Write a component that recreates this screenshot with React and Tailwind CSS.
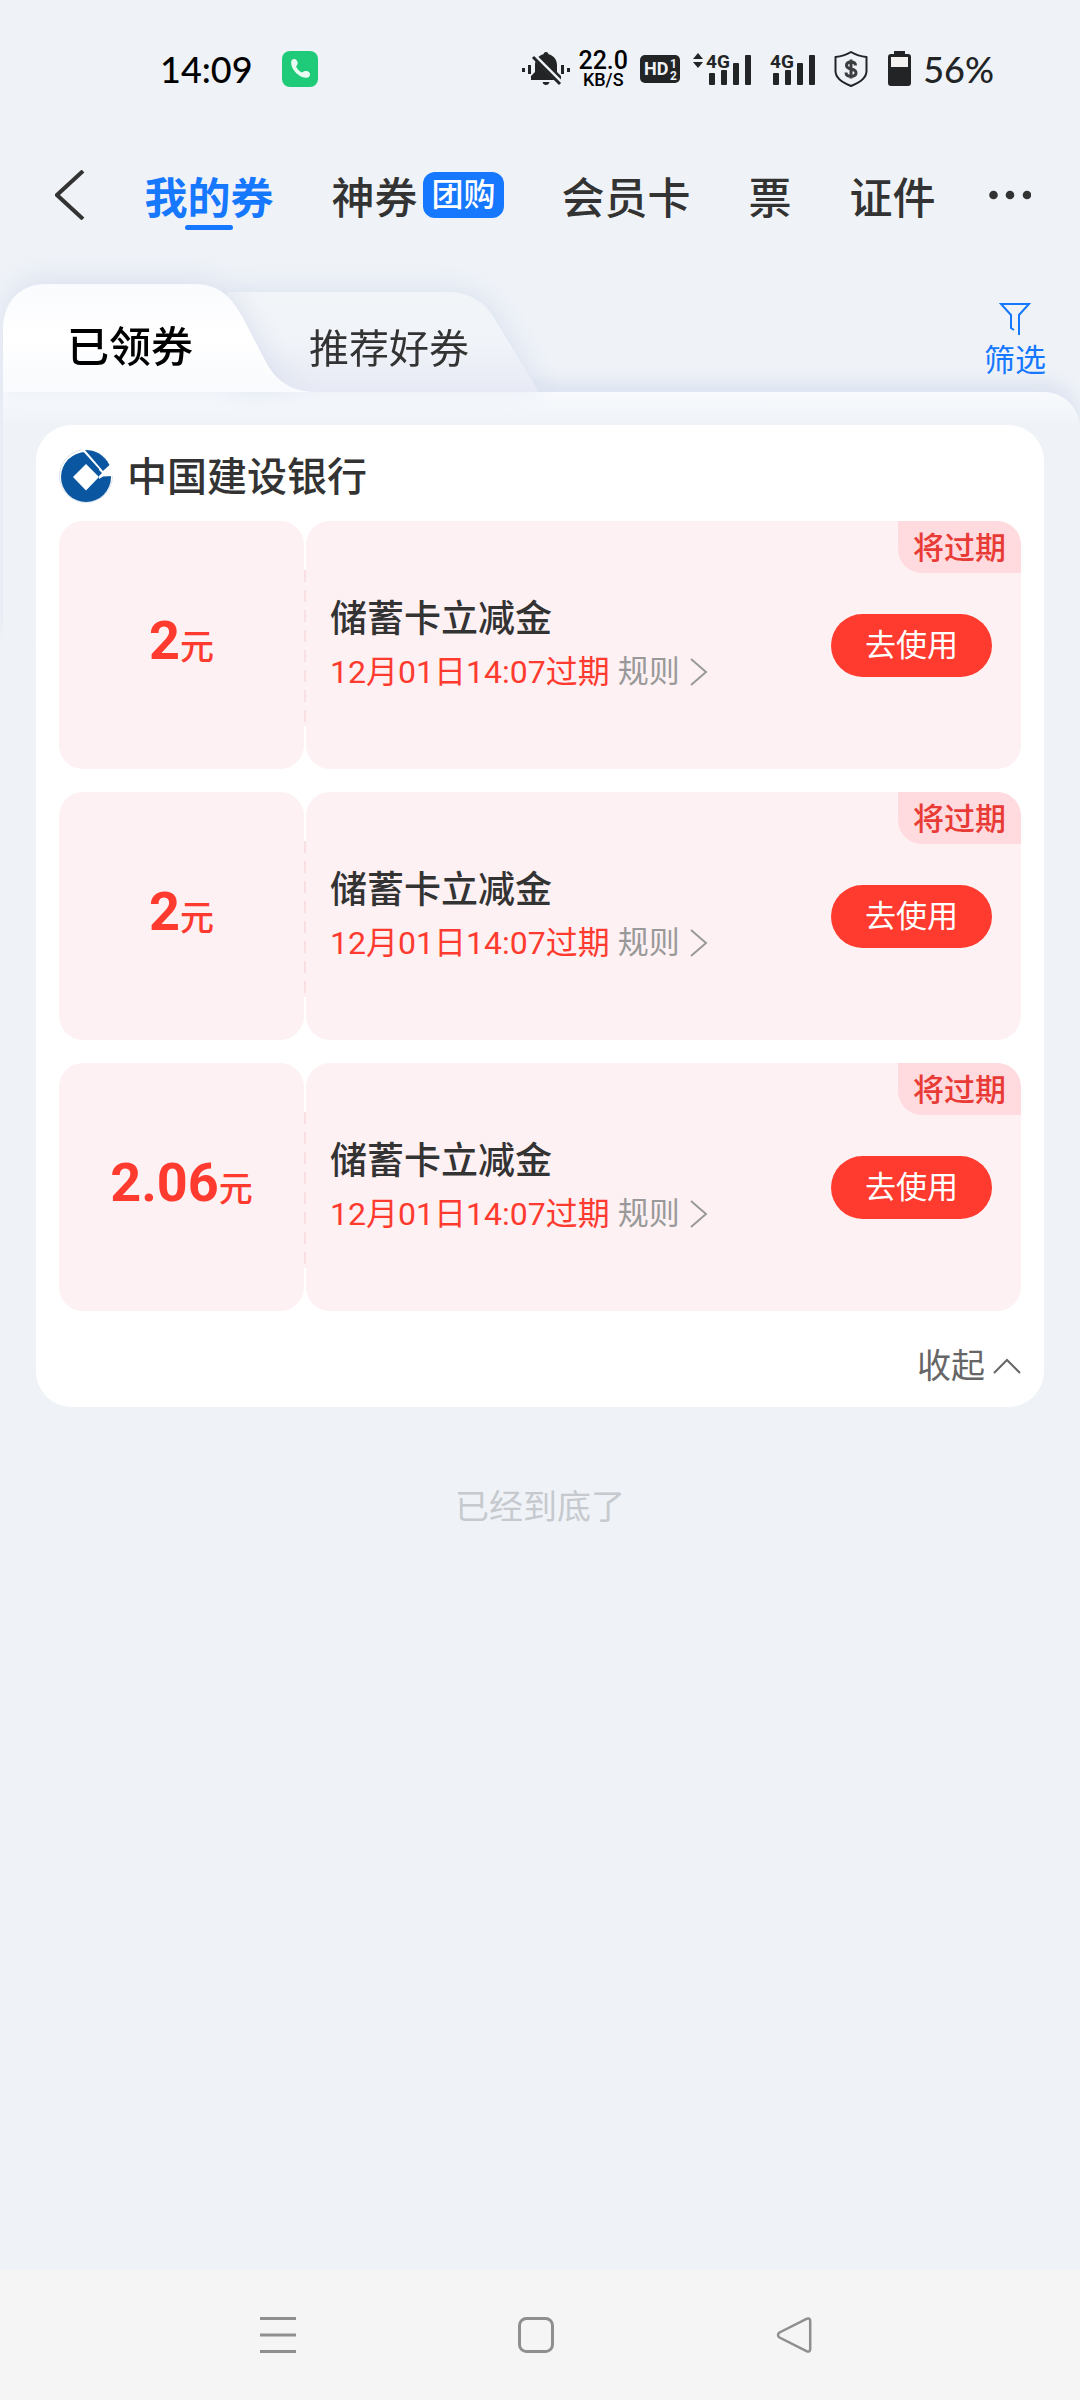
import { useState } from "react";

const NAV_TABS = [
  { label: "我的券", active: true },
  { label: "神券", tag: "团购" },
  { label: "会员卡" },
  { label: "票" },
  { label: "证件" },
];

const COUPONS = [
  { id: 1, amount: "2", title: "储蓄卡立减金", expires: "12月01日14:07过期" },
  { id: 2, amount: "2", title: "储蓄卡立减金", expires: "12月01日14:07过期" },
  { id: 3, amount: "2.06", title: "储蓄卡立减金", expires: "12月01日14:07过期" },
];

function MutedBellIcon() {
  return (
    <svg width="48" height="36" viewBox="0 0 48 36" fill="#222426">
      <path d="M0 17h3v4H0zM6 14h3v9H6zM39 14h3v9h-3zM45 17h3v4h-3z" />
      <path d="M24 1c1.500 0 2.500 1 2.500 2.300C31.500 4.500 35 8.500 35 14v7l4 4v4H9v-4l4-4v-7c0-5.500 3.500-9.500 8.500-10.700C21.500 2 22.500 1 24 1zM20.500 31h7c-.5 2-1.700 3-3.500 3s-3-1-3.500-3z" />
      <path d="M11 4l28 28" stroke="#eff3f8" strokeWidth="5" />
      <path d="M11 6l27 27" stroke="#222426" strokeWidth="3" />
    </svg>
  );
}

function SignalIcon({ arrows }) {
  return (
    <svg
      width={arrows ? 60 : 46}
      height="46"
      viewBox={arrows ? "-14 -6 60 46" : "0 -6 46 46"}
      fill="#222426"
    >
      {arrows && <path d="M-8 1l5 6h-10zM-8 16l5-6h-10z" />}
      <text x="0" y="16" className="font-['Roboto',sans-serif] text-[19px] font-bold">
        4G
      </text>
      <rect x="3" y="21" width="6" height="12" rx="1" />
      <rect x="15" y="18" width="6" height="15" rx="1" />
      <rect x="27" y="11" width="6" height="22" rx="1" />
      <rect x="39" y="3" width="6" height="30" rx="1" />
    </svg>
  );
}

function StatusBar() {
  return (
    <div className="flex h-[138px] items-center justify-between pr-[86px] pl-[160px] font-['Lato_Medium','Lato',sans-serif]">
      <div className="flex items-center gap-[29px]">
        <span className="text-[36px] leading-[36px] font-medium text-black">
          14:09
        </span>
        <svg width="36" height="36" viewBox="0 0 36 36">
          <rect width="36" height="36" rx="8" fill="#1fcb78" />
          <path
            d="M9.500 9.500c1-1.500 3.500-2 4.700-.8 1.300 1.400 2 3.300 1.200 4.800l-1.300 2c1.200 2.600 3 4.600 5.600 6l2.600-1.200c1.500-.6 3.600-.3 4.900 1 1.400 1.400 1 4-.7 4.900-2.600 1.300-6.500.6-10.500-2.600C11.500 20 8 14 9.500 9.500z"
            fill="#e9fbf2"
          />
        </svg>
      </div>
      <div className="flex items-center text-[#222426]">
        <MutedBellIcon />
        <div className="ml-2 flex w-[50px] flex-col items-center font-['Roboto',sans-serif] font-medium text-black">
          <span className="text-[25px] leading-[21px]">22.0</span>
          <span className="text-[18px] leading-[17px]">KB/S</span>
        </div>
        <svg className="ml-3" width="40" height="28" viewBox="0 0 40 28">
          <rect width="40" height="28" rx="5" fill="#222426" />
          <g fill="#eff3f8" className="font-['Roboto',sans-serif] font-bold">
            <text x="4" y="20" className="text-[18px]">
              HD
            </text>
            <text x="30" y="13" className="text-[12px]">
              1
            </text>
            <text x="30" y="25" className="text-[12px]">
              2
            </text>
          </g>
        </svg>
        <div className="ml-3 flex gap-[18px]">
          <SignalIcon arrows />
          <SignalIcon />
        </div>
        <svg
          className="ml-[18px]"
          width="34"
          height="38"
          viewBox="0 0 34 38"
          fill="none"
          stroke="#222426"
          strokeWidth="2"
        >
          <path
            d="M17 2C12 5 7 6.500 1.500 7v14c0 7 6.500 11.500 15.500 15 9-3.500 15.500-8 15.500-15V7C27 6.500 22 5 17 2z"
            strokeLinejoin="round"
          />
          <path
            d="M21.500 15.500c0-2.300-1.800-3.500-4.500-3.500s-4.500 1.200-4.500 3.500c0 4.800 9.500 2.300 9.500 7.200 0 2.300-2.200 3.600-5 3.600s-5-1.400-5-3.900M17 9.500v19"
            stroke="#3c3e40"
            strokeWidth="3"
          />
        </svg>
        <svg className="ml-5" width="23" height="36" viewBox="0 0 23 36">
          <path
            d="M6 0h11v3h3a3 3 0 0 1 3 3v26a3 3 0 0 1-3 3H3a3 3 0 0 1-3-3V6a3 3 0 0 1 3-3h3z"
            fill="#222426"
          />
          <rect x="3" y="6" width="17" height="10" fill="#f4f2f0" />
        </svg>
        <span className="ml-3 text-[36px] leading-[36px] font-medium">56%</span>
      </div>
    </div>
  );
}

function NavTab({ label, tag, active }) {
  return (
    <a href="#" className="relative flex items-center gap-[6px] whitespace-nowrap">
      <span
        className={
          active
            ? "text-[43px] leading-[42px] font-bold text-[#1677ff]"
            : "text-[43px] leading-[42px] font-medium text-[#333]"
        }
      >
        {label}
      </span>
      {tag && (
        <span className="rounded-xl bg-[#1677ff] px-2 py-[7px] font-['Roboto','Noto_Sans_CJK_SC',sans-serif] text-[32px] leading-[32px] font-medium text-white">
          {tag}
        </span>
      )}
      {active && (
        <span className="absolute top-[51px] left-1/2 h-[5px] w-12 -translate-x-1/2 rounded-sm bg-[#1677ff]" />
      )}
    </a>
  );
}

function TopNav() {
  return (
    <header className="flex h-[114px] items-center justify-between pr-[49px] pl-[55px]">
      <button type="button" aria-label="返回">
        <svg width="36" height="50" viewBox="0 0 36 50" fill="none">
          <path d="M28 1L2 25l26 24" stroke="#333" strokeWidth="4" />
        </svg>
      </button>
      <nav className="flex items-center gap-[58px]">
        {NAV_TABS.map((tab) => (
          <NavTab key={tab.label} {...tab} />
        ))}
      </nav>
      <button type="button" aria-label="更多">
        <svg width="42" height="10" viewBox="0 0 42 10" fill="#333">
          <circle cx="4.500" cy="5" r="4.300" />
          <circle cx="21" cy="5" r="4.300" />
          <circle cx="38" cy="5" r="4.300" />
        </svg>
      </button>
    </header>
  );
}

function SubTabs() {
  return (
    <div className="relative z-10 flex h-[108px] items-end pr-[34px]">
      <div className="z-10 [filter:drop-shadow(0_-6px_12px_rgba(190,200,225,0.4))]">
        <button
          type="button"
          className="block h-[108px] w-[314px] bg-linear-to-b from-[#fafbfe] via-white to-[#f8fafd] pt-3 pr-[122px] pl-16 text-left text-[42px] leading-[42px] font-medium whitespace-nowrap text-black [clip-path:path('M0_108V46C0_18_16_0_44_0H190C216_0_228_12_240_34L264_80C274_98_290_108_314_108Z')]"
        >
          已领券
        </button>
      </div>
      <div className="-ml-[90px] [filter:drop-shadow(4px_-4px_12px_rgba(190,200,225,0.35))]">
        <button
          type="button"
          className="block h-[100px] w-[312px] bg-linear-to-b from-[#f2f5f8] via-[#f0f3f8] to-[#e7eaf4] pt-2 pr-[70px] pl-[82px] text-[40px] leading-[40px] whitespace-nowrap text-[#333] [clip-path:path('M0_0H220C246_0_260_12_272_34L312_100H0Z')]"
        >
          推荐好券
        </button>
      </div>
      <button
        type="button"
        className="mb-[14px] ml-auto flex flex-col items-center gap-[2px] text-[31px] leading-[40px] text-[#1677ff]"
      >
        <svg width="32" height="34" viewBox="0 0 32 34" fill="none">
          <path
            d="M15 28l-3-2V13L2 2h28L20 13v20"
            stroke="#1677ff"
            strokeWidth="2"
          />
        </svg>
        筛选
      </button>
    </div>
  );
}

function BankLogo() {
  return (
    <svg width="54" height="54" viewBox="0 0 54 54">
      <circle cx="27" cy="27" r="26.500" fill="#fff" stroke="#dde3ee" />
      <circle cx="27" cy="28" r="25" fill="#0a56a0" />
      <path d="M40 30V20L22 0h32v27l-10 .5z" fill="#fff" />
      <path d="M22.500 3L43 24l-4 4-14-14z" fill="#0a56a0" />
      <path d="M26 1c10.500 0 19 4.500 24.500 15l-6.500 6z" fill="#0a56a0" />
      <path d="M27 15l13 13-13 13.500L14 28z" fill="#fff" />
    </svg>
  );
}

function CouponCard({ amount, title, expires }) {
  return (
    <li className="relative flex h-[248px] gap-[2px]">
      <div className="flex w-[245px] items-center justify-center rounded-3xl bg-[#fef1f3] pb-2 text-[#ff3b30]">
        <div className="flex items-baseline">
          <span className="font-['Roboto',sans-serif] text-[54px] leading-[60px] font-bold">
            {amount}
          </span>
          <span className="text-[34px] leading-[34px] font-medium">元</span>
        </div>
      </div>
      <div className="absolute top-[49px] left-[245px] h-[156px] w-[2px] bg-[repeating-linear-gradient(to_bottom,#f8dfe2_0_12px,#fef1f3_12px_20px)]" />
      <div className="flex flex-1 items-center justify-between rounded-3xl bg-[#fef1f3] pr-[29px] pl-6">
        <div className="flex flex-col gap-3">
          <h3 className="text-[37px] leading-[42px] font-medium text-[#333]">
            {title}
          </h3>
          <div className="flex items-center font-['Roboto','Noto_Sans_CJK_SC',sans-serif] text-[31px] leading-[46px]">
            <span className="text-[32px] text-[#ff3b30]">{expires}</span>
            <a href="#" className="ml-2 flex items-center gap-[10px] text-[#999]">
              规则
              <svg width="18" height="28" viewBox="0 0 18 28" fill="none">
                <path d="M1 1l15 13L1 27" stroke="#999" strokeWidth="2" />
              </svg>
            </a>
          </div>
        </div>
        <button
          type="button"
          className="h-[63px] w-[161px] rounded-full bg-[#ff3b30] font-['Roboto','Noto_Sans_CJK_SC',sans-serif] text-[31px] leading-[31px] text-white"
        >
          去使用
        </button>
      </div>
      <span className="absolute top-0 right-0 rounded-tr-3xl rounded-bl-3xl bg-[#ffdade] px-[15px] pb-[2px] text-[31px] leading-[50px] font-medium text-[#e93b36]">
        将过期
      </span>
    </li>
  );
}

function BankGroup() {
  const [open, setOpen] = useState(true);
  const visible = open ? COUPONS : COUPONS.slice(0, 1);

  return (
    <section className="rounded-[36px] bg-white px-[23px] pt-6 pb-4">
      <div className="flex items-center gap-[14px]">
        <BankLogo />
        <h2 className="pb-1 text-[40px] leading-[50px] font-medium text-[#333]">
          中国建设银行
        </h2>
      </div>
      <ul className="mt-[18px] flex flex-col gap-[23px]">
        {visible.map((coupon) => (
          <CouponCard key={coupon.id} {...coupon} />
        ))}
      </ul>
      <button
        type="button"
        onClick={() => setOpen(!open)}
        className="mt-[30px] ml-auto flex items-center gap-2 font-['Roboto','Noto_Sans_CJK_SC',sans-serif] text-[34px] leading-[50px] text-[#666]"
      >
        {open ? "收起" : "展开"}
        <svg
          width="28"
          height="16"
          viewBox="0 0 28 16"
          fill="none"
          className={open ? "" : "rotate-180"}
        >
          <path d="M1 15L14 2l13 13" stroke="#666" strokeWidth="2" />
        </svg>
      </button>
    </section>
  );
}

function SystemNav() {
  return (
    <nav className="flex h-[130px] items-center justify-center gap-[222px] bg-[#f5f5f5] pr-2">
      <button type="button" aria-label="最近任务">
        <svg width="36" height="36" viewBox="0 0 36 36">
          <path d="M0 1.500h36M0 18h36M0 34.500h36" stroke="#8f8f8f" strokeWidth="3" />
        </svg>
      </button>
      <button type="button" aria-label="主页">
        <svg width="36" height="36" viewBox="0 0 36 36" fill="none">
          <rect x="1.500" y="1.500" width="33" height="33" rx="7" stroke="#8f8f8f" strokeWidth="3" />
        </svg>
      </button>
      <button type="button" aria-label="返回">
        <svg width="36" height="36" viewBox="0 0 36 36" fill="none">
          <path
            d="M30.500 1.800L3.500 15.500c-2 1.200-2 3.800 0 5L30.500 34.200c2 1 3.700 0 3.700-2V3.800c0-2-1.700-3-3.700-2z"
            stroke="#8f8f8f"
            strokeWidth="2.500"
          />
        </svg>
      </button>
    </nav>
  );
}

export default function App() {
  return (
    <div className="flex min-h-screen flex-col overflow-hidden bg-[#eff3f8] font-['Noto_Sans_CJK_SC',sans-serif]">
      <StatusBar />
      <TopNav />
      <main className="mt-8 flex-1 pl-[3px]">
        <SubTabs />
        <div className="relative pt-[33px] pr-9 pl-[33px]">
          <div className="absolute inset-x-0 top-0 h-[250px] rounded-tr-[36px] bg-linear-to-b from-[#f8fafd] to-transparent to-[34px] shadow-[0_-12px_14px_rgba(190,200,225,0.3)]" />
          <div className="relative">
            <BankGroup />
            <p className="mt-[76px] text-center text-[34px] leading-[44px] text-[#c6c9ce]">
              已经到底了
            </p>
          </div>
        </div>
      </main>
      <SystemNav />
    </div>
  );
}
